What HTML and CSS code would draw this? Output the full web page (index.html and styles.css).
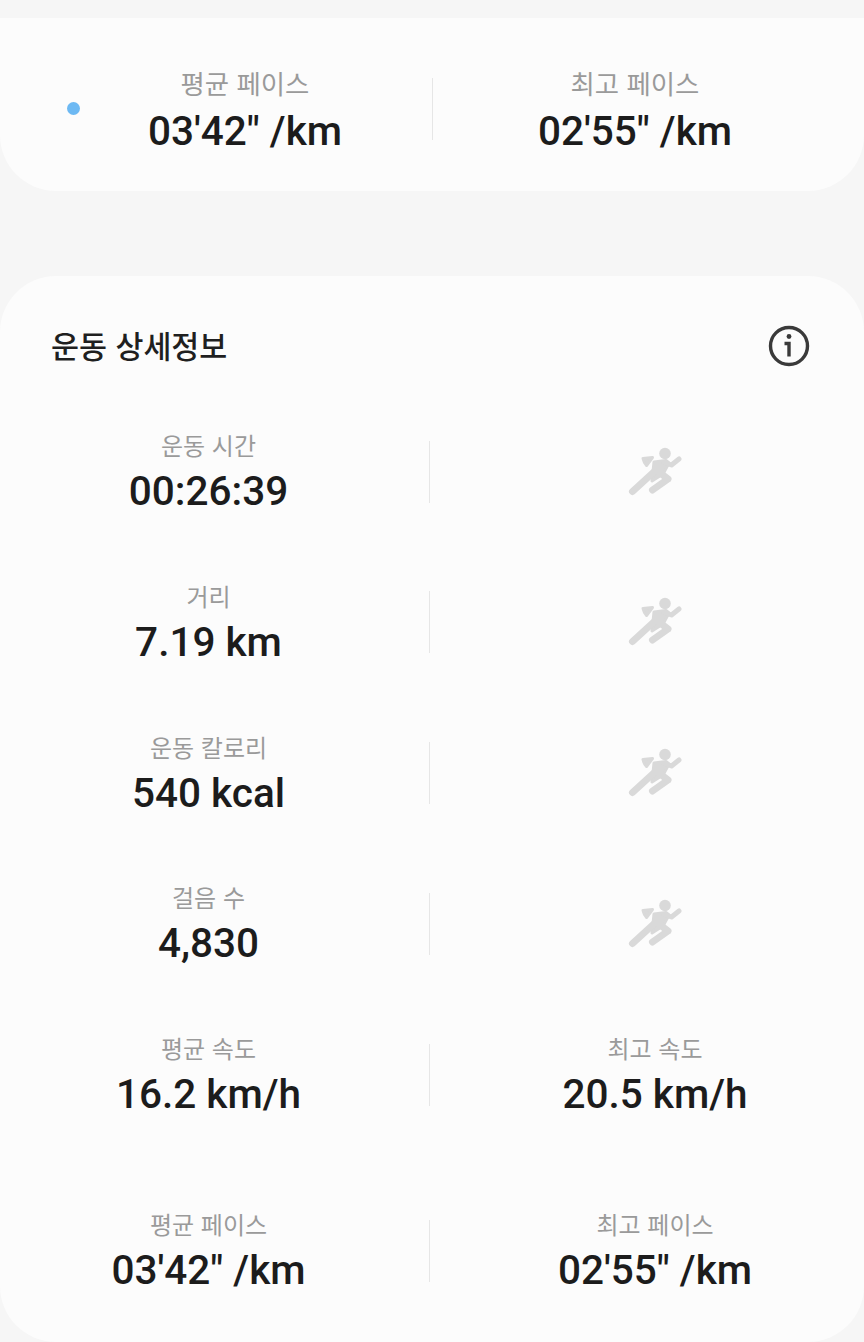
FILE: index.html
```html
<!DOCTYPE html>
<html lang="ko">
<head>
    <meta charset="UTF-8">
    <meta name="viewport" content="width=device-width, initial-scale=1.0">
    <title>운동 상세정보</title>
    <link rel="stylesheet" href="styles.css">
</head>
<body>
    <svg class="defs" width="0" height="0">
        <symbol id="runner" viewBox="0 0 54 50">
            <circle cx="37" cy="6.5" r="5.8"/>
            <path class="blob" d="M15 11.5 L24.5 10.5 L18.5 18.5 Q16 16 15 11.5 Z"/>
            <path class="blob" d="M26 15 L38 13.5 L41 16 L35 27 L24 34 Z"/>
            <path class="limb thin" d="M36 15.5 L43.5 18 L51 12"/>
            <path class="limb" d="M28 23 L4.5 44.5"/>
            <path class="limb" d="M31 25 L40 32 L24.5 43"/>
        </symbol>
    </svg>

    <section class="card summary">
        <span class="dot"></span>
        <div class="stat">
            <div class="label">평균 페이스</div>
            <div class="value">03'42" /km</div>
        </div>
        <span class="divider"></span>
        <div class="stat">
            <div class="label">최고 페이스</div>
            <div class="value">02'55" /km</div>
        </div>
    </section>

    <section class="card details">
        <header class="details-head">
            <h2>운동 상세정보</h2>
            <svg class="info" viewBox="0 -1 42 42">
                <circle cx="21" cy="21" r="18.5"/>
                <path d="M16.5 18.5 H21 V31.5"/>
                <circle class="info-dot" cx="21" cy="11.5" r="2.4"/>
            </svg>
        </header>

        <div class="row">
            <div class="stat">
                <div class="label">운동 시간</div>
                <div class="value">00:26:39</div>
            </div>
            <span class="divider"></span>
            <svg class="runner"><use href="#runner"/></svg>
        </div>
        <div class="row">
            <div class="stat">
                <div class="label">거리</div>
                <div class="value">7.19 km</div>
            </div>
            <span class="divider"></span>
            <svg class="runner"><use href="#runner"/></svg>
        </div>
        <div class="row">
            <div class="stat">
                <div class="label">운동 칼로리</div>
                <div class="value">540 kcal</div>
            </div>
            <span class="divider"></span>
            <svg class="runner"><use href="#runner"/></svg>
        </div>
        <div class="row">
            <div class="stat">
                <div class="label">걸음 수</div>
                <div class="value">4,830</div>
            </div>
            <span class="divider"></span>
            <svg class="runner"><use href="#runner"/></svg>
        </div>
        <div class="row">
            <div class="stat">
                <div class="label">평균 속도</div>
                <div class="value">16.2 km/h</div>
            </div>
            <span class="divider"></span>
            <div class="stat">
                <div class="label">최고 속도</div>
                <div class="value">20.5 km/h</div>
            </div>
        </div>
        <div class="row last">
            <div class="stat">
                <div class="label">평균 페이스</div>
                <div class="value">03'42" /km</div>
            </div>
            <span class="divider"></span>
            <div class="stat">
                <div class="label">최고 페이스</div>
                <div class="value">02'55" /km</div>
            </div>
        </div>
    </section>
</body>
</html>
```

FILE: styles.css
```css
html, body {
    margin: 0;
    height: 1342px;
    overflow: hidden;
}

body {
    background-color: #f6f6f6;
    font-family: Roboto, "Noto Sans CJK KR", sans-serif;
    padding-top: 18px;
    box-sizing: border-box;
}

.defs {
    display: block;
    height: 0;
}

.card {
    background-color: #fcfcfc;
    border-radius: 56px;
}

.stat {
    text-align: center;
}

.label {
    font-family: "Noto Sans CJK KR", sans-serif;
    font-size: 24px;
    line-height: 32px;
    margin-bottom: 7px;
    color: #9a9a9a;
}

.value {
    font-size: 40.5px;
    font-weight: 500;
    line-height: 46px;
    color: #1c1c1c;
}

.divider {
    width: 1px;
    height: 62px;
    margin-left: 12px;
    background-color: #e6e6e6;
}

/* top card */
.summary {
    height: 173px;
    padding-top: 11px;
    box-sizing: border-box;
    border-radius: 0 0 56px 56px;
    display: grid;
    grid-template-columns: 67px 13px 330px 23px 404px;
    align-items: center;
    margin-bottom: 85px;
}

.summary .label {
    font-size: 26.4px;
    line-height: 34px;
    margin-bottom: 8px;
}

.summary .divider {
    margin: -2px 0 0 22px;
}

.dot {
    grid-column: 2;
    width: 13px;
    height: 13px;
    margin-top: -4px;
    border-radius: 50%;
    background-color: #6db9f3;
}

/* detail card */
.details {
    padding-top: 48px;
    height: 1066px;
    box-sizing: border-box;
}

.details-head {
    display: flex;
    justify-content: space-between;
    align-items: center;
    padding: 0 54px 0 51px;
    margin-bottom: 63px;
}

.details-head h2 {
    margin: 0;
    font-family: "Noto Sans CJK KR", sans-serif;
    font-size: 30.4px;
    font-weight: 500;
    line-height: 40px;
    color: #1f1f1f;
}

.info {
    width: 42px;
    height: 42px;
    overflow: visible;
    fill: none;
    stroke: #3a3a3a;
    stroke-width: 3.4;
}

.info-dot {
    fill: #3a3a3a;
    stroke: none;
}

.row {
    display: grid;
    grid-template-columns: 417px 1fr 418px;
    align-items: center;
    height: 85px;
    margin-bottom: 65.75px;
}

.row.last {
    margin-top: 91.25px;
    margin-bottom: 0;
}

.runner {
    width: 54px;
    height: 50px;
    justify-self: center;
    fill: #d9d9d9;
    stroke: #d9d9d9;
    stroke-width: 0;
}

.limb {
    fill: none;
    stroke-width: 7;
    stroke-linecap: round;
    stroke-linejoin: round;
}

.limb.thin {
    stroke-width: 5;
}

.blob {
    stroke-width: 3;
    stroke-linejoin: round;
}
```
